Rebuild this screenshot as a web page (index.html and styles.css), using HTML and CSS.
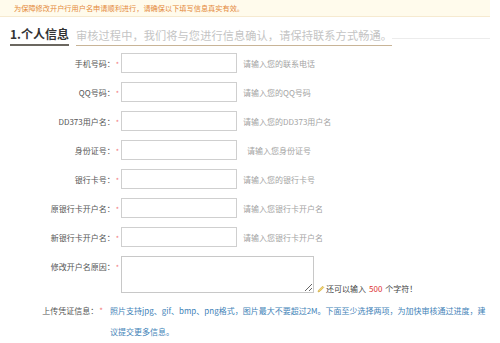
FILE: index.html
```html
<!DOCTYPE html>
<html>
<head>
  <title>修改开户行用户名</title>
  <link rel="stylesheet" href="styles.css">
</head>
<body>
  <div class="notice">为保障修改开户行用户名申请顺利进行，请确保以下填写信息真实有效。</div>

  <div class="section-title">
    <span class="title-main">1.个人信息</span>
    <span class="title-sub">审核过程中，我们将与您进行信息确认，请保持联系方式畅通。</span>
    <span class="title-rest"></span>
  </div>

  <form class="info-form">
    <div class="form-row">
      <label class="form-label">手机号码：<i>*</i></label>
      <input type="text" class="form-input">
      <span class="form-hint">请输入您的联系电话</span>
    </div>
    <div class="form-row">
      <label class="form-label">QQ号码：<i>*</i></label>
      <input type="text" class="form-input">
      <span class="form-hint">请输入您的QQ号码</span>
    </div>
    <div class="form-row">
      <label class="form-label">DD373用户名：<i>*</i></label>
      <input type="text" class="form-input">
      <span class="form-hint">请输入您的DD373用户名</span>
    </div>
    <div class="form-row">
      <label class="form-label">身份证号：<i>*</i></label>
      <input type="text" class="form-input">
      <span class="form-hint hint-indent">请输入您身份证号</span>
    </div>
    <div class="form-row">
      <label class="form-label">银行卡号：<i>*</i></label>
      <input type="text" class="form-input">
      <span class="form-hint">请输入您的银行卡号</span>
    </div>
    <div class="form-row">
      <label class="form-label">原银行卡开户名：<i>*</i></label>
      <input type="text" class="form-input">
      <span class="form-hint">请输入您银行卡开户名</span>
    </div>
    <div class="form-row">
      <label class="form-label">新银行卡开户名：<i>*</i></label>
      <input type="text" class="form-input">
      <span class="form-hint">请输入您银行卡开户名</span>
    </div>
    <div class="form-row row-textarea">
      <label class="form-label">修改开户名原因：<i>*</i></label>
      <textarea class="form-textarea"></textarea>
      <span class="char-count">
        <svg class="pencil" width="8" height="8" viewBox="0 0 8 8">
          <path d="M1 7 L1.6 5.2 L5.6 1.2 L6.8 2.4 L2.8 6.4 Z" fill="#f2d46b" stroke="#c9a23a" stroke-width="0.6"/>
        </svg>还可以输入 <b>500</b> 个字符！
      </span>
    </div>
    <div class="upload-row">
      <label class="upload-label">上传凭证信息：<i>*</i></label>
      <p class="upload-text">照片支持jpg、gif、bmp、png格式，图片最大不要超过2M。下面至少选择两项，为加快审核通过进度，建议提交更多信息。</p>
    </div>
  </form>
</body>
</html>
```

FILE: styles.css
```css
body {
  margin: 0;
  font-family: "Noto Sans CJK SC", "Noto Sans", sans-serif;
  background-color: #fff;
  color: #555;
}

/* top notice bar */
.notice {
  width: 476px;
  height: 16px;
  padding-left: 14px;
  line-height: 16px;
  font-size: 7.2px;
  color: #e4893a;
  background-color: #fffbec;
  border-bottom: 1px solid #f6ead0;
}

/* section heading */
.section-title {
  display: flex;
  align-items: flex-end;
  margin: 8px 10px 0 10px;
  height: 21px;
}

.title-main {
  font-size: 12px;
  font-weight: bold;
  color: #333;
  line-height: 18px;
  padding-bottom: 1px;
  border-bottom: 2px solid #6b6760;
}

.title-sub {
  margin-left: 7px;
  font-size: 11.2px;
  color: #c4c4c4;
  line-height: 18px;
  padding-bottom: 1px;
  border-bottom: 1px solid #c8b497;
  letter-spacing: 0.1px;
}

.title-rest {
  flex: 1;
  margin-bottom: 7px;
  border-bottom: 1px solid #ececec;
}

/* form rows */
.info-form {
  margin-top: 7px;
}

.form-row {
  display: flex;
  align-items: center;
  height: 20px;
  margin-bottom: 9px;
}

.form-label {
  width: 119px;
  text-align: right;
  font-size: 8px;
  color: #555;
  flex-shrink: 0;
}

.form-label i,
.upload-label i {
  font-style: normal;
  color: #f27a7a;
  font-size: 7px;
  margin-left: 1px;
}

.form-input {
  box-sizing: border-box;
  width: 116px;
  height: 20px;
  margin: 0 0 0 2px;
  padding: 0 4px;
  border: 1px solid #cfcfcf;
  border-radius: 0;
}

.form-hint {
  margin-left: 6px;
  font-size: 8px;
  color: #a3a3a3;
}

.hint-indent {
  margin-left: 10px;
}

.row-textarea {
  align-items: flex-start;
  height: 37px;
  margin-bottom: 0;
}

.row-textarea .form-label {
  padding-top: 5px;
}

.form-textarea {
  box-sizing: border-box;
  width: 193px;
  height: 37px;
  margin: 0 0 0 2px;
  border: 1px solid #c8c8c8;
  resize: both;
}

.char-count {
  align-self: flex-end;
  margin-left: 3px;
  font-size: 8px;
  color: #444;
  line-height: 12px;
  margin-bottom: -2px;
  display: flex;
  align-items: center;
}

.char-count b {
  font-weight: normal;
  color: #d33;
  margin: 0 3px;
}

.pencil {
  margin-right: 1px;
}

/* upload section */
.upload-row {
  display: flex;
  margin-top: 7px;
}

.upload-label {
  width: 103px;
  flex-shrink: 0;
  text-align: right;
  font-size: 8px;
  line-height: 21px;
  color: #555;
}

.upload-label i {
  font-size: 8px;
}

.upload-text {
  margin: 0 10px 0 7px;
  font-size: 8px;
  line-height: 21px;
  color: #3f83b8;
}
```
